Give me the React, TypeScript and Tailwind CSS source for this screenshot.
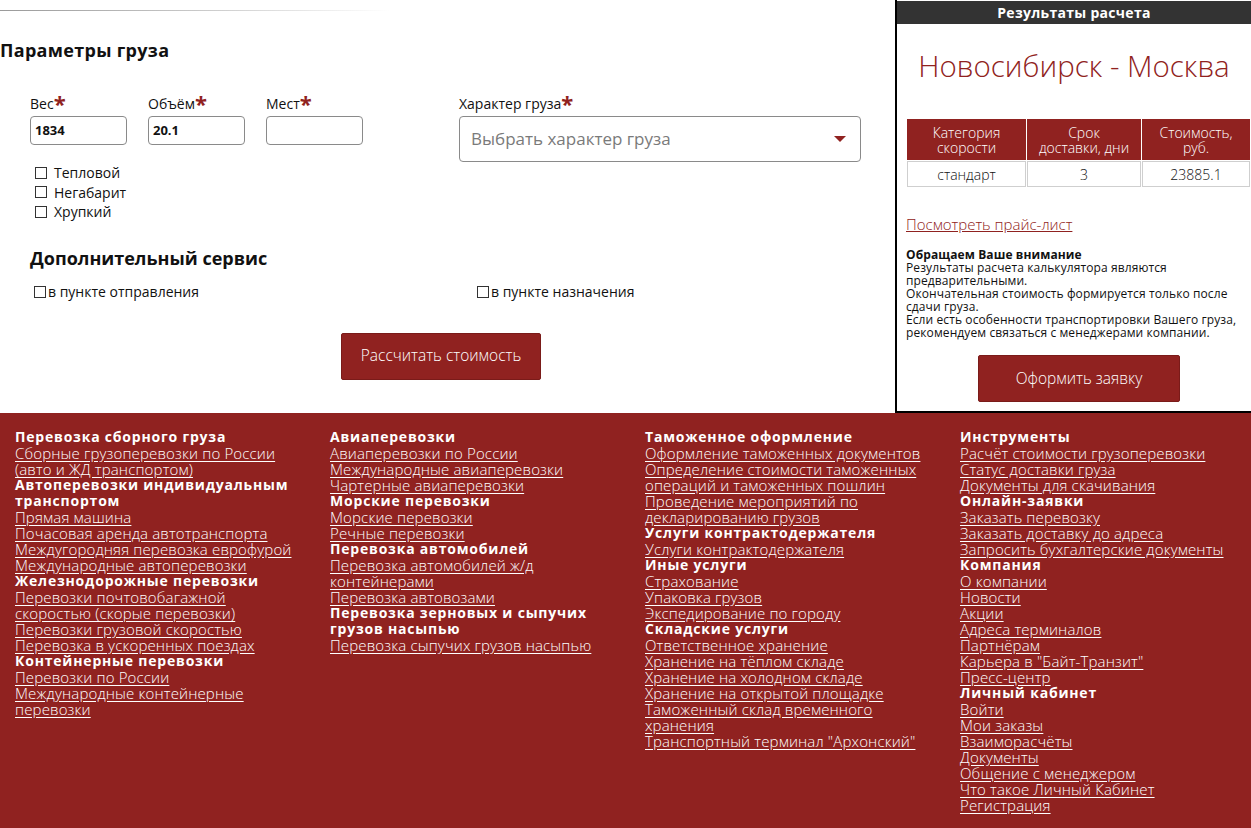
import React from "react";

const RED = "bg-[#902220]";

function Req() {
  return <span className="text-[#902220] text-[22px] font-bold leading-none relative top-[2px]">*</span>;
}

function Field({ label, value }: { label: string; value: string }) {
  return (
    <div className="flex flex-col">
      <div className="text-[14px] leading-[16px] h-[18px] flex items-end text-[#111]">
        <span>{label}</span>
        <Req />
      </div>
      <div className="mt-[4px] w-[97px] h-[29px] border border-[#8a8a8a] rounded-[4px] flex items-center px-[4px] text-[13px] font-bold text-[#111]">
        {value}
      </div>
    </div>
  );
}

function Box() {
  return <span className="inline-block w-[12px] h-[12px] border border-[#333] bg-white shrink-0" />;
}

type Item = { t: string; h?: boolean };

const col1: Item[] = [
  { t: "Перевозка сборного груза", h: true },
  { t: "Сборные грузоперевозки по России" },
  { t: "(авто и ЖД транспортом)" },
  { t: "Автоперевозки индивидуальным", h: true },
  { t: "транспортом", h: true },
  { t: "Прямая машина" },
  { t: "Почасовая аренда автотранспорта" },
  { t: "Междугородняя перевозка еврофурой" },
  { t: "Международные автоперевозки" },
  { t: "Железнодорожные перевозки", h: true },
  { t: "Перевозки почтовобагажной" },
  { t: "скоростью (скорые перевозки)" },
  { t: "Перевозки грузовой скоростью" },
  { t: "Перевозка в ускоренных поездах" },
  { t: "Контейнерные перевозки", h: true },
  { t: "Перевозки по России" },
  { t: "Международные контейнерные" },
  { t: "перевозки" },
];

const col2: Item[] = [
  { t: "Авиаперевозки", h: true },
  { t: "Авиаперевозки по России" },
  { t: "Международные авиаперевозки" },
  { t: "Чартерные авиаперевозки" },
  { t: "Морские перевозки", h: true },
  { t: "Морские перевозки" },
  { t: "Речные перевозки" },
  { t: "Перевозка автомобилей", h: true },
  { t: "Перевозка автомобилей ж/д" },
  { t: "контейнерами" },
  { t: "Перевозка автовозами" },
  { t: "Перевозка зерновых и сыпучих", h: true },
  { t: "грузов насыпью", h: true },
  { t: "Перевозка сыпучих грузов насыпью" },
];

const col3: Item[] = [
  { t: "Таможенное оформление", h: true },
  { t: "Оформление таможенных документов" },
  { t: "Определение стоимости таможенных" },
  { t: "операций и таможенных пошлин" },
  { t: "Проведение мероприятий по" },
  { t: "декларированию грузов" },
  { t: "Услуги контрактодержателя", h: true },
  { t: "Услуги контрактодержателя" },
  { t: "Иные услуги", h: true },
  { t: "Страхование" },
  { t: "Упаковка грузов" },
  { t: "Экспедирование по городу" },
  { t: "Складские услуги", h: true },
  { t: "Ответственное хранение" },
  { t: "Хранение на тёплом складе" },
  { t: "Хранение на холодном складе" },
  { t: "Хранение на открытой площадке" },
  { t: "Таможенный склад временного" },
  { t: "хранения" },
  { t: "Транспортный терминал \"Архонский\"" },
];

const col4: Item[] = [
  { t: "Инструменты", h: true },
  { t: "Расчёт стоимости грузоперевозки" },
  { t: "Статус доставки груза" },
  { t: "Документы для скачивания" },
  { t: "Онлайн-заявки", h: true },
  { t: "Заказать перевозку" },
  { t: "Заказать доставку до адреса" },
  { t: "Запросить бухгалтерские документы" },
  { t: "Компания", h: true },
  { t: "О компании" },
  { t: "Новости" },
  { t: "Акции" },
  { t: "Адреса терминалов" },
  { t: "Партнёрам" },
  { t: "Карьера в \"Байт-Транзит\"" },
  { t: "Пресс-центр" },
  { t: "Личный кабинет", h: true },
  { t: "Войти" },
  { t: "Мои заказы" },
  { t: "Взаиморасчёты" },
  { t: "Документы" },
  { t: "Общение с менеджером" },
  { t: "Что такое Личный Кабинет" },
  { t: "Регистрация" },
];

function FooterCol({ items }: { items: Item[] }) {
  return (
    <div className="flex flex-col pl-[15px]">
      {items.map((it, i) =>
        it.h ? (
          <div key={i} className="h-[16px] text-[14px] leading-[16px] font-bold text-white tracking-[0.8px] whitespace-nowrap">
            {it.t}
          </div>
        ) : (
          <div key={i} className="h-[16px] text-[15px] leading-[16px] font-light text-white underline underline-offset-[2px] tracking-[0.15px] whitespace-nowrap">
            {it.t}
          </div>
        )
      )}
    </div>
  );
}

export default function App() {
  return (
    <div className="w-[1251px] h-[828px] overflow-hidden bg-white text-[#111]" style={{ fontFamily: "'Open Sans', 'Noto Sans', sans-serif" }}>
      <div className="flex h-[413px]">
        {/* left form */}
        <div className="w-[895px] flex flex-col">
          <div className="mt-[10px] h-px w-[390px] bg-gradient-to-r from-[#9a9a9a] via-[#c8c8c8] to-transparent" />
          <h2 className="mt-[28px] text-[18px] leading-[22px] font-bold tracking-[0.3px]">Параметры груза</h2>
          <div className="mt-[33px] ml-[30px] flex">
            <div className="flex gap-[21px]">
              <Field label="Вес" value="1834" />
              <Field label="Объём" value="20.1" />
              <Field label="Мест" value="" />
            </div>
            <div className="ml-[96px] flex flex-col">
              <div className="text-[14px] leading-[16px] h-[18px] flex items-end">
                <span>Характер груза</span>
                <Req />
              </div>
              <div className="mt-[4px] w-[402px] h-[46px] border border-[#8a8a8a] rounded-[4px] flex items-center justify-between pl-[11px] pr-[14px]">
                <span className="text-[17px] text-[#7a7a7a]">Выбрать характер груза</span>
                <svg width="12" height="7" viewBox="0 0 12 7">
                  <polygon points="0,0 12,0 6,6" fill="#902220" />
                </svg>
              </div>
            </div>
          </div>
          <div className="ml-[35px] mt-[1px] flex flex-col">
            {["Тепловой", "Негабарит", "Хрупкий"].map((t) => (
              <div key={t} className="flex items-center gap-[7px] h-[19.5px] text-[14px]">
                <Box />
                <span>{t}</span>
              </div>
            ))}
          </div>
          <h2 className="mt-[25px] ml-[30px] text-[18px] leading-[22px] font-bold">Дополнительный сервис</h2>
          <div className="mt-[14px] flex text-[14px] leading-[18px]">
            <div className="ml-[34px] w-[443px] flex items-center gap-[2px]">
              <Box />
              <span>в пункте отправления</span>
            </div>
            <div className="flex items-center gap-[2px]">
              <Box />
              <span>в пункте назначения</span>
            </div>
          </div>
          <div className="mt-[32px] ml-[341px]">
            <div className={`w-[200px] h-[47px] ${RED} rounded-[2px] border border-[#7a1b19] flex items-center justify-center text-white text-[15.5px] font-light`}>
              Рассчитать стоимость
            </div>
          </div>
        </div>

        {/* right panel */}
        <div className="w-[356px] border-l-2 border-b-2 border-black flex flex-col">
          <div className="mt-px h-[23px] bg-[#333333] text-white text-[14px] font-bold flex items-center justify-center tracking-[0.3px]">
            Результаты расчета
          </div>
          <div className="mt-[20px] text-center text-[29.5px] leading-[44px] text-[#902220] font-light">
            Новосибирск - Москва
          </div>
          <div className="mt-[31px] ml-[10px] flex flex-col gap-[1px]">
            <div className="flex gap-[1px] h-[41px]">
              {[
                ["Категория", "скорости", "w-[119px]"],
                ["Срок", "доставки, дни", "w-[114px]"],
                ["Стоимость,", "руб.", "w-[108px]"],
              ].map(([a, b, w]) => (
                <div key={a} className={`${w} ${RED} text-white text-[14px] leading-[15px] font-light flex flex-col items-center justify-center`}>
                  <span>{a}</span>
                  <span>{b}</span>
                </div>
              ))}
            </div>
            <div className="flex gap-[1px] h-[26px]">
              {[
                ["стандарт", "w-[119px]"],
                ["3", "w-[114px]"],
                ["23885.1", "w-[108px]"],
              ].map(([a, w]) => (
                <div key={a} className={`${w} border border-[#cfcfcf] text-[14px] font-light flex items-center justify-center`}>
                  {a}
                </div>
              ))}
            </div>
          </div>
          <div className="mt-[28px] ml-[9px] text-[15px] leading-[18px] text-[#902220] underline font-light">
            Посмотреть прайс-лист
          </div>
          <div className="mt-[15px] ml-[9px] text-[12px] leading-[13px] tracking-[0.1px]">
            <div className="font-bold">Обращаем Ваше внимание</div>
            <div>Результаты расчета калькулятора являются</div>
            <div>предварительными.</div>
            <div>Окончательная стоимость формируется только после</div>
            <div>сдачи груза.</div>
            <div>Если есть особенности транспортировки Вашего груза,</div>
            <div>рекомендуем связаться с менеджерами компании.</div>
          </div>
          <div className="mt-[16px] ml-[81px]">
            <div className={`w-[202px] h-[47px] ${RED} rounded-[2px] border border-[#7a1b19] flex items-center justify-center text-white text-[15.5px] font-light`}>
              Оформить заявку
            </div>
          </div>
        </div>
      </div>

      {/* footer */}
      <div className={`${RED} h-[415px] pt-[16px] grid grid-cols-[315px_315px_315px_306px]`}>
        <FooterCol items={col1} />
        <FooterCol items={col2} />
        <FooterCol items={col3} />
        <FooterCol items={col4} />
      </div>
    </div>
  );
}
